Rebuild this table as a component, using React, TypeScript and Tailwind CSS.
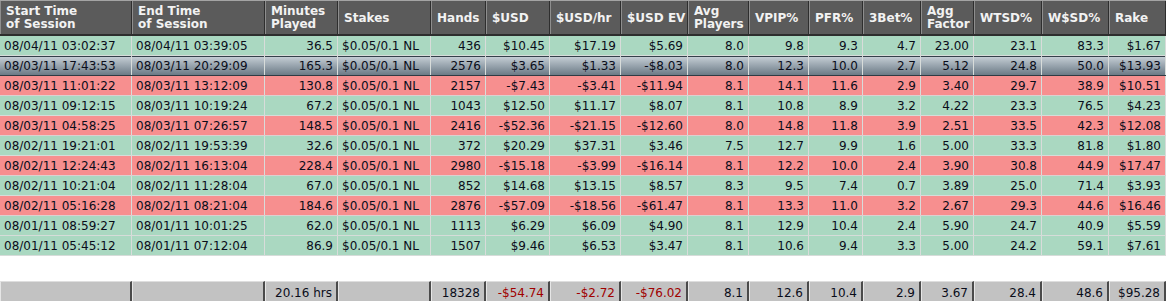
import React from "react";

type Col = { label: string[]; w: string; align: "l" | "r" };

const cols: Col[] = [
  { label: ["Start Time", "of Session"], w: "w-[132px]", align: "l" },
  { label: ["End Time", "of Session"], w: "w-[133px]", align: "l" },
  { label: ["Minutes", "Played"], w: "w-[73px]", align: "r" },
  { label: ["Stakes"], w: "w-[93px]", align: "l" },
  { label: ["Hands"], w: "w-[55px]", align: "r" },
  { label: ["$USD"], w: "w-[64px]", align: "r" },
  { label: ["$USD/hr"], w: "w-[71px]", align: "r" },
  { label: ["$USD EV"], w: "w-[67px]", align: "r" },
  { label: ["Avg", "Players"], w: "w-[61px]", align: "r" },
  { label: ["VPIP%"], w: "w-[60px]", align: "r" },
  { label: ["PFR%"], w: "w-[54px]", align: "r" },
  { label: ["3Bet%"], w: "w-[58px]", align: "r" },
  { label: ["Agg", "Factor"], w: "w-[53px]", align: "r" },
  { label: ["WTSD%"], w: "w-[68px]", align: "r" },
  { label: ["W$SD%"], w: "w-[67px]", align: "r" },
  { label: ["Rake"], w: "w-[57px]", align: "r" },
];

type Row = { kind: "g" | "r" | "s"; v: string[] };
const S = "$0.05/0.1 NL";
const rows: Row[] = [
  { kind: "g", v: ["08/04/11 03:02:37", "08/04/11 03:39:05", "36.5", S, "436", "$10.45", "$17.19", "$5.69", "8.0", "9.8", "9.3", "4.7", "23.00", "23.1", "83.3", "$1.67"] },
  { kind: "s", v: ["08/03/11 17:43:53", "08/03/11 20:29:09", "165.3", S, "2576", "$3.65", "$1.33", "-$8.03", "8.0", "12.3", "10.0", "2.7", "5.12", "24.8", "50.0", "$13.93"] },
  { kind: "r", v: ["08/03/11 11:01:22", "08/03/11 13:12:09", "130.8", S, "2157", "-$7.43", "-$3.41", "-$11.94", "8.1", "14.1", "11.6", "2.9", "3.40", "29.7", "38.9", "$10.51"] },
  { kind: "g", v: ["08/03/11 09:12:15", "08/03/11 10:19:24", "67.2", S, "1043", "$12.50", "$11.17", "$8.07", "8.1", "10.8", "8.9", "3.2", "4.22", "23.3", "76.5", "$4.23"] },
  { kind: "r", v: ["08/03/11 04:58:25", "08/03/11 07:26:57", "148.5", S, "2416", "-$52.36", "-$21.15", "-$12.60", "8.0", "14.8", "11.8", "3.9", "2.51", "33.5", "42.3", "$12.08"] },
  { kind: "g", v: ["08/02/11 19:21:01", "08/02/11 19:53:39", "32.6", S, "372", "$20.29", "$37.31", "$3.46", "7.5", "12.7", "9.9", "1.6", "5.00", "33.3", "81.8", "$1.80"] },
  { kind: "r", v: ["08/02/11 12:24:43", "08/02/11 16:13:04", "228.4", S, "2980", "-$15.18", "-$3.99", "-$16.14", "8.1", "12.2", "10.0", "2.4", "3.90", "30.8", "44.9", "$17.47"] },
  { kind: "g", v: ["08/02/11 10:21:04", "08/02/11 11:28:04", "67.0", S, "852", "$14.68", "$13.15", "$8.57", "8.3", "9.5", "7.4", "0.7", "3.89", "25.0", "71.4", "$3.93"] },
  { kind: "r", v: ["08/02/11 05:16:28", "08/02/11 08:21:04", "184.6", S, "2876", "-$57.09", "-$18.56", "-$61.47", "8.1", "13.3", "11.0", "3.2", "2.67", "29.3", "44.6", "$16.46"] },
  { kind: "g", v: ["08/01/11 08:59:27", "08/01/11 10:01:25", "62.0", S, "1113", "$6.29", "$6.09", "$4.90", "8.1", "12.9", "10.4", "2.4", "5.90", "24.7", "40.9", "$5.59"] },
  { kind: "g", v: ["08/01/11 05:45:12", "08/01/11 07:12:04", "86.9", S, "1507", "$9.46", "$6.53", "$3.47", "8.1", "10.6", "9.4", "3.3", "5.00", "24.2", "59.1", "$7.61"] },
];

const footer = ["", "", "20.16 hrs", "", "18328", "-$54.74", "-$2.72", "-$76.02", "8.1", "12.6", "10.4", "2.9", "3.67", "28.4", "48.6", "$95.28"];

const font = { fontFamily: '"DejaVu Sans", Verdana, sans-serif' };

export default function App() {
  return (
    <div className="w-[1166px] h-[301px] bg-white overflow-hidden text-[12px] text-[#0a0d1a]" style={font}>
      {/* header */}
      <div className="flex h-[36px] bg-[#5b5b5b] border-t border-t-[#a4a4a4] border-b-2 border-b-[#2e2e2e]">
        {cols.map((c, i) => (
          <div
            key={i}
            className={`${c.w} shrink-0 flex flex-col justify-center border-l border-l-[#8e8e8e] border-r border-r-[#2e2e2e] pl-[5px] pt-[1px] text-[12px] font-bold leading-[13px] text-[#f2f2f2]`}
          >
            {c.label.map((l, j) => (
              <span key={j} className="whitespace-nowrap">{l}</span>
            ))}
          </div>
        ))}
      </div>
      {/* rows */}
      {rows.map((r, ri) => (
        <div
          key={ri}
          className={
            r.kind === "s"
              ? "flex h-[20px] border-b border-b-[#2f3a44] bg-gradient-to-b from-[#c9d2d9] to-[#6c7a86] shadow-[inset_0_1px_0_#34404a]"
              : r.kind === "g"
              ? "flex h-[20px] border-b border-b-[#d6dcd9] bg-[#aad8c1]"
              : "flex h-[20px] border-b border-b-[#dcd0d0] bg-[#f78f8f]"
          }
        >
          {r.v.map((val, ci) => (
            <div
              key={ci}
              className={`${cols[ci].w} shrink-0 flex items-center border-r border-r-[#d8dcda] whitespace-nowrap ${
                cols[ci].align === "r" ? "justify-end pr-[4px]" : "justify-start pl-[4px]"
              }`}
            >
              {val}
            </div>
          ))}
        </div>
      ))}
      {/* footer */}
      <div className="flex h-[22px] mt-[25px]">
        {footer.map((val, ci) => (
          <div
            key={ci}
            className={`${cols[ci].w} shrink-0 flex items-center justify-end pr-[4px] bg-[#c2c2c2] border-t border-t-[#dedede] border-l border-l-[#e6e6e6] border-r-2 border-r-[#4a4a4a] whitespace-nowrap ${
              val.startsWith("-") ? "text-[#a00000]" : "text-[#0a0d1a]"
            }`}
          >
            {val}
          </div>
        ))}
      </div>
    </div>
  );
}
